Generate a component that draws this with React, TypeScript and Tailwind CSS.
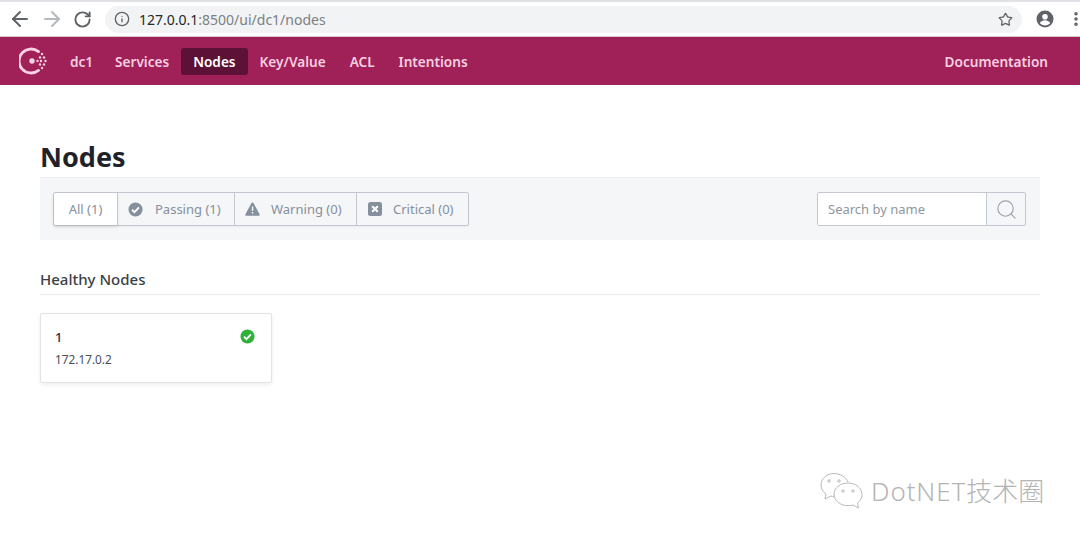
import { ArrowLeft, ArrowRight, RotateCw, Info, Star, Search, MoreVertical } from "lucide-react";

const NAV_ITEMS = ["dc1", "Services", "Nodes", "Key/Value", "ACL", "Intentions"];

function ConsulLogo() {
  return (
    <svg width="30" height="30" viewBox="0 0 30 30" fill="none">
      <path d="M19.500 5.600A12 12 0 1 0 19.500 24.400" stroke="#f8d3e4" strokeWidth="2.800" strokeLinecap="round" />
      <circle cx="13" cy="15" r="2.700" fill="#f8d3e4" />
      {[
        [18.500, 15],
        [22, 15],
        [26.500, 15],
        [21, 11.500],
        [25, 11.500],
        [21, 18.500],
        [25, 18.500],
        [23, 8],
        [23, 22],
      ].map(([cx, cy]) => (
        <circle key={`${cx}-${cy}`} cx={cx} cy={cy} r="1.200" fill="#f8d3e4" />
      ))}
    </svg>
  );
}

function CheckIcon({ color, size }: { color: string; size: number }) {
  return (
    <svg width={size} height={size} viewBox="0 0 16 16">
      <circle cx="8" cy="8" r="7.500" fill={color} />
      <path d="M4.300 8.300l2.600 2.500 4.800-5" fill="none" stroke="#fff" strokeWidth="2" />
    </svg>
  );
}

function WarningIcon() {
  return (
    <svg width="15" height="14" viewBox="0 0 15 14">
      <path d="M7.500 0.500c.5 0 .9.3 1.100.7l6 11c.4.7-.1 1.600-1 1.600H1.400c-.9 0-1.400-.9-1-1.600l6-11c.2-.4.6-.7 1.100-.7z" fill="#858f9e" />
      <rect x="6.800" y="4.500" width="1.500" height="4.500" fill="#f3f4f6" />
      <rect x="6.800" y="10" width="1.500" height="1.500" fill="#f3f4f6" />
    </svg>
  );
}

function CriticalIcon() {
  return (
    <svg width="14" height="14" viewBox="0 0 14 14">
      <rect width="14" height="14" rx="2.500" fill="#858f9e" />
      <path d="M4.200 4.200l5.600 5.600M9.800 4.200l-5.600 5.600" stroke="#fff" strokeWidth="2" />
    </svg>
  );
}

function WeChatMark() {
  return (
    <svg width="44" height="38" viewBox="0 0 44 38" fill="none" stroke="#b9b9b9" strokeWidth="1">
      <path d="M28 10C26 5 20 1.500 14 1.500 7 1.500 1 6.500 1 13c0 4 2 7 5 9l-1 5 6-3c1 .3 2 .5 3.500.5" />
      <circle cx="9" cy="9" r="1.200" />
      <circle cx="19" cy="9" r="1.200" />
      <path d="M28 11c7.500 0 14 5 14 11.500 0 3.500-2 6.500-4.500 8.500l1 5-5.500-3c-1.500.5-3 .7-5 .7-7.500 0-14-5-14-11.500S20.500 11 28 11z" />
      <circle cx="23" cy="19" r="1.200" />
      <circle cx="33" cy="19" r="1.200" />
    </svg>
  );
}

export default function App() {
  return (
    <div className="relative h-[539px] w-[1080px] overflow-hidden bg-white font-['Noto_Sans','Noto_Sans_CJK_SC',sans-serif]">
      {/* browser chrome */}
      <div className="h-[37px] border-t-2 border-b border-t-[#dfe1e5] border-b-[#d9c3cc] bg-white">
        <div className="flex h-full items-center pl-[8px]">
          <ArrowLeft size={24} strokeWidth={2} className="shrink-0 text-[#5f6368]" />
          <ArrowRight size={24} strokeWidth={2} className="ml-[8px] shrink-0 text-[#b6b9bd]" />
          <RotateCw size={19} strokeWidth={2.400} className="ml-[9px] shrink-0 text-[#5f6368]" />
          <div className="ml-[13px] flex h-[27px] w-[917px] shrink-0 items-center rounded-full bg-[#f1f3f4] pr-[9px] pl-[9px]">
            <Info size={16} strokeWidth={2} className="text-[#5f6368]" />
            <span className="ml-[9px] text-[14px] text-[#7c7f83]">
              <span className="text-[#26282b]">127.0.0.1</span>:8500/ui/dc1/nodes
            </span>
            <Star size={15} strokeWidth={2} className="ml-auto text-[#5f6368]" />
          </div>
          <svg width="18" height="18" viewBox="0 0 18 18" className="ml-[14px] shrink-0">
            <circle cx="9" cy="9" r="8.500" fill="#5f6368" />
            <circle cx="9" cy="6.800" r="2.800" fill="#fff" />
            <path d="M3.800 13c1.200-2 3.200-2.800 5.200-2.800s4 .8 5.200 2.800c-1.200 1.600-3.100 2.500-5.200 2.500S5 14.600 3.800 13z" fill="#fff" />
          </svg>
          <MoreVertical size={18} strokeWidth={2.800} className="ml-[13px] shrink-0 text-[#5f6368]" />
        </div>
      </div>

      {/* consul nav */}
      <div className="flex h-[48px] items-center bg-[#a02157] pr-[32px] pl-[19px]">
        <ConsulLogo />
        <div className="ml-[9px] flex items-center">
          {NAV_ITEMS.map((item) => (
            <a
              key={item}
              className={`flex h-[27px] items-center rounded-[3px] pt-[2px] pl-[12px] text-[13.600px] font-semibold ${
                item === "dc1" ? "pr-[10px]" : "pr-[12px]"
              } ${item === "Nodes" ? "bg-[#5e1136] text-white" : "text-[#f8cfe2]"}`}
            >
              {item}
            </a>
          ))}
        </div>
        <a className="ml-auto pt-[2px] text-[13.600px] font-semibold text-[#f8cfe2]">Documentation</a>
      </div>

      {/* page */}
      <div className="px-[40px]">
        <h1 className="mt-[53px] text-[27px] leading-[38px] font-bold text-[#1f2329]">Nodes</h1>

        <div className="mt-[1px] flex h-[63px] items-start justify-between border-t border-[#eceef1] bg-[#f5f6f8] pt-[14px] pr-[14px] pl-[13px]">
          <div className="flex h-[34px] rounded-[2px] border border-[#c3c8d0] text-[13px] text-[#858f9e] shadow-[0_1px_2px_rgba(0,0,0,0.05)]">
            <div className="flex w-[63px] items-center justify-center rounded-l-[2px] bg-white pt-[1px] shadow-[0_2px_4px_rgba(0,0,0,0.1)]">All (1)</div>
            <div className="flex w-[117px] items-center border-l border-[#c3c8d0] pl-[10px]">
              <CheckIcon color="#858f9e" size={15} />
              <span className="ml-[12px] pt-[1px]">Passing (1)</span>
            </div>
            <div className="flex w-[122px] items-center border-l border-[#c3c8d0] pl-[10px]">
              <WarningIcon />
              <span className="ml-[11px] pt-[1px]">Warning (0)</span>
            </div>
            <div className="flex w-[112px] items-center border-l border-[#c3c8d0] pl-[11px]">
              <CriticalIcon />
              <span className="ml-[11px] pt-[1px]">Critical (0)</span>
            </div>
          </div>

          <div className="flex h-[34px] w-[209px] rounded-[2px] border border-[#c3c8d0]">
            <div className="flex flex-1 items-center bg-white pt-[1px] pl-[10px] text-[13px] text-[#8f96a1]">Search by name</div>
            <div className="flex w-[39px] items-center justify-center border-l border-[#c3c8d0]">
              <Search size={23} strokeWidth={1.200} className="text-[#9aa2ad]" />
            </div>
          </div>
        </div>

        <h2 className="mt-[27px] text-[15px] leading-[24px] font-medium text-[#3b3f45]">Healthy Nodes</h2>
        <div className="mt-[3px] border-t border-[#e8eaed]" />

        <div className="mt-[18px] flex h-[70px] w-[232px] justify-between rounded-[2px] border border-[#e1e3e7] bg-white pt-[13px] pr-[16px] pl-[14px] shadow-[0_2px_4px_rgba(0,0,0,0.07)]">
          <div>
            <div className="text-[13px] leading-[20px] font-medium text-[#2b2f36]">1</div>
            <div className="mt-[3px] text-[11.800px] leading-[18px] text-[#4a4f57]">172.17.0.2</div>
          </div>
          <div className="pt-[2px]">
            <CheckIcon color="#2eb039" size={15} />
          </div>
        </div>
      </div>

      {/* watermark over the page corner */}
      <div className="absolute top-[471px] left-[820px] flex items-center">
        <WeChatMark />
        <span className="ml-[7px] text-[26px] leading-[40px] font-light text-[#b4b4b4]">
          <span className="tracking-[0.9px]">DotNET</span>技术圈
        </span>
      </div>
    </div>
  );
}
